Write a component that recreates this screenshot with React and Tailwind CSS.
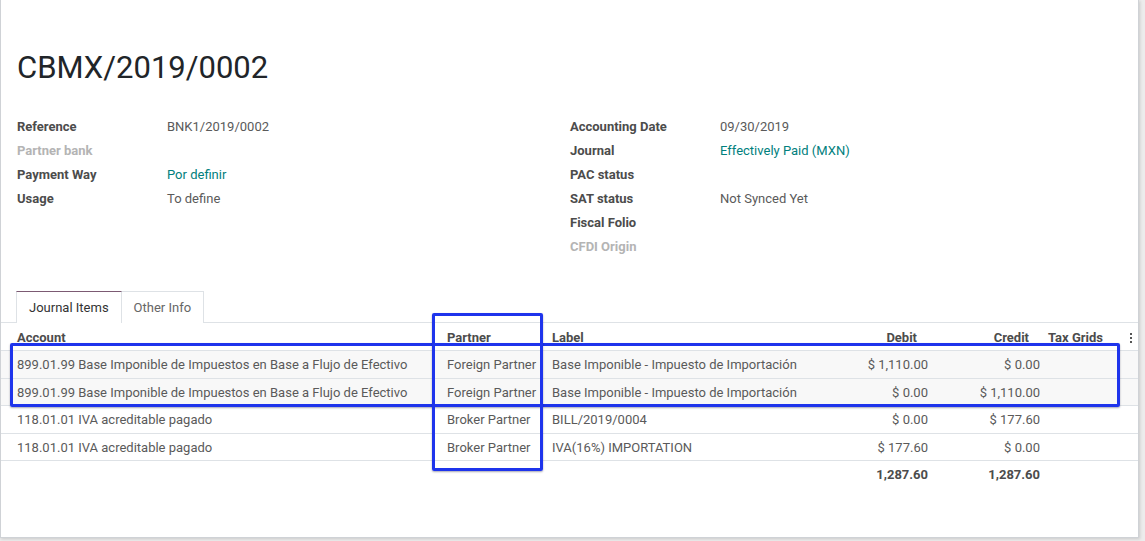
import React from 'react';

const leftFields = [
  { label: 'Reference', value: 'BNK1/2019/0002' },
  { label: 'Partner bank', muted: true },
  { label: 'Payment Way', value: 'Por definir', link: true },
  { label: 'Usage', value: 'To define' },
];

const rightFields = [
  { label: 'Accounting Date', value: '09/30/2019' },
  { label: 'Journal', value: 'Effectively Paid (MXN)', link: true },
  { label: 'PAC status' },
  { label: 'SAT status', value: 'Not Synced Yet' },
  { label: 'Fiscal Folio' },
  { label: 'CFDI Origin', muted: true },
];

const lines = [
  {
    account: '899.01.99 Base Imponible de Impuestos en Base a Flujo de Efectivo',
    partner: 'Foreign Partner',
    label: 'Base Imponible - Impuesto de Importación',
    debit: '$ 1,110.00',
    credit: '$ 0.00',
    shaded: true,
  },
  {
    account: '899.01.99 Base Imponible de Impuestos en Base a Flujo de Efectivo',
    partner: 'Foreign Partner',
    label: 'Base Imponible - Impuesto de Importación',
    debit: '$ 0.00',
    credit: '$ 1,110.00',
    shaded: true,
  },
  {
    account: '118.01.01 IVA acreditable pagado',
    partner: 'Broker Partner',
    label: 'BILL/2019/0004',
    debit: '$ 0.00',
    credit: '$ 177.60',
  },
  {
    account: '118.01.01 IVA acreditable pagado',
    partner: 'Broker Partner',
    label: 'IVA(16%) IMPORTATION',
    debit: '$ 177.60',
    credit: '$ 0.00',
  },
];

const cols = 'grid grid-cols-[436px_105px_293px_103px_107px_80px_13px]';

const Field = ({ label, value, muted, link }) => (
  <div className="flex h-[24px] items-center leading-[24px]">
    <div className={`w-[150px] font-bold ${muted ? 'text-[#b4b4b4]' : 'text-[#4c4c4c]'}`}>{label}</div>
    {value && <div className={link ? 'text-[#01807d]' : 'text-[#5a5a5a]'}>{value}</div>}
  </div>
);

const App = () => {
  return (
    <div className="flex h-[541px] w-full bg-[#ececec] text-[13px] text-[#4c4c4c]" style={{ fontFamily: 'Roboto, "Liberation Sans", sans-serif' }}>
      <div className="relative h-[538px] w-[1139px] border-r border-b border-l border-[#cfd2d6] bg-white shadow-[1px_1px_3px_rgba(0,0,0,0.15)]">
        <h1 className="pt-[49px] pl-[16px] text-[31px] leading-[37px] font-normal text-[#212529]">CBMX/2019/0002</h1>

        <div className="mt-[29px] grid grid-cols-[553px_1fr] pl-[16px]">
          <div>
            {leftFields.map((f) => (
              <Field key={f.label} {...f} />
            ))}
          </div>
          <div>
            {rightFields.map((f) => (
              <Field key={f.label} {...f} />
            ))}
          </div>
        </div>

        {/* tabs */}
        <div className="mt-[32px] flex h-[32px] border-b border-[#dee2e6] pl-[15px]">
          <div className="mb-[-1px] flex h-[32px] items-center border-x border-t border-x-[#dee2e6] border-t-[#7c5a73] bg-white px-[12px] text-[#333]">
            Journal Items
          </div>
          <div className="flex h-[32px] items-center border border-b-0 border-l-0 border-[#dee2e6] bg-white px-[12px] text-[#666]">
            Other Info
          </div>
        </div>

        {/* table */}
        <div className={`${cols} h-[28px] items-end border-b border-[#dee2e6] pb-[4px] font-bold text-[#4c4c4c]`}>
          <div className="pl-[16px] leading-[16px]">Account</div>
          <div className="pl-[10px] leading-[16px]">Partner</div>
          <div className="pl-[10px] leading-[16px]">Label</div>
          <div className="pr-[21px] text-right leading-[16px]">Debit</div>
          <div className="pr-[16px] text-right leading-[16px]">Credit</div>
          <div className="pl-[3px] leading-[16px]">Tax Grids</div>
          <div className="flex flex-col items-center gap-[2px] self-start pt-[10px] pr-[1px]">
            <span className="h-[2px] w-[2px] bg-[#555]" />
            <span className="h-[2px] w-[2px] bg-[#555]" />
            <span className="h-[2px] w-[2px] bg-[#555]" />
          </div>
        </div>

        {lines.map((l, i) => (
          <div
            key={i}
            className={`${cols} h-[27.5px] items-center border-b border-[#dee2e6] pt-[1px] text-[#5a5a5a] ${l.shaded ? 'bg-[#f8f8f8]' : 'bg-white'}`}
          >
            <div className="truncate pl-[16px]">{l.account}</div>
            <div className="pl-[10px] whitespace-nowrap">{l.partner}</div>
            <div className="pl-[10px] whitespace-nowrap">{l.label}</div>
            <div className="pr-[10px] text-right">{l.debit}</div>
            <div className="pr-[5px] text-right">{l.credit}</div>
            <div />
            <div />
          </div>
        ))}

        <div className={`${cols} h-[27px] items-center font-bold text-[#4c4c4c]`}>
          <div />
          <div />
          <div />
          <div className="pr-[10px] text-right">1,287.60</div>
          <div className="pr-[5px] text-right">1,287.60</div>
          <div />
          <div />
        </div>

        {/* hand-drawn highlight boxes */}
        <div className="pointer-events-none absolute top-[343px] left-[9px] h-[64px] w-[1110px] rounded-[2px] border-[3px] border-[#1e34ec] shadow-[0_1px_2px_rgba(0,0,40,0.35)]" />
        <div className="pointer-events-none absolute top-[313px] left-[431px] h-[158px] w-[111px] rounded-[2px] border-[3px] border-[#1e34ec] shadow-[0_1px_2px_rgba(0,0,40,0.35)]" />
      </div>
    </div>
  );
};

export default App;
